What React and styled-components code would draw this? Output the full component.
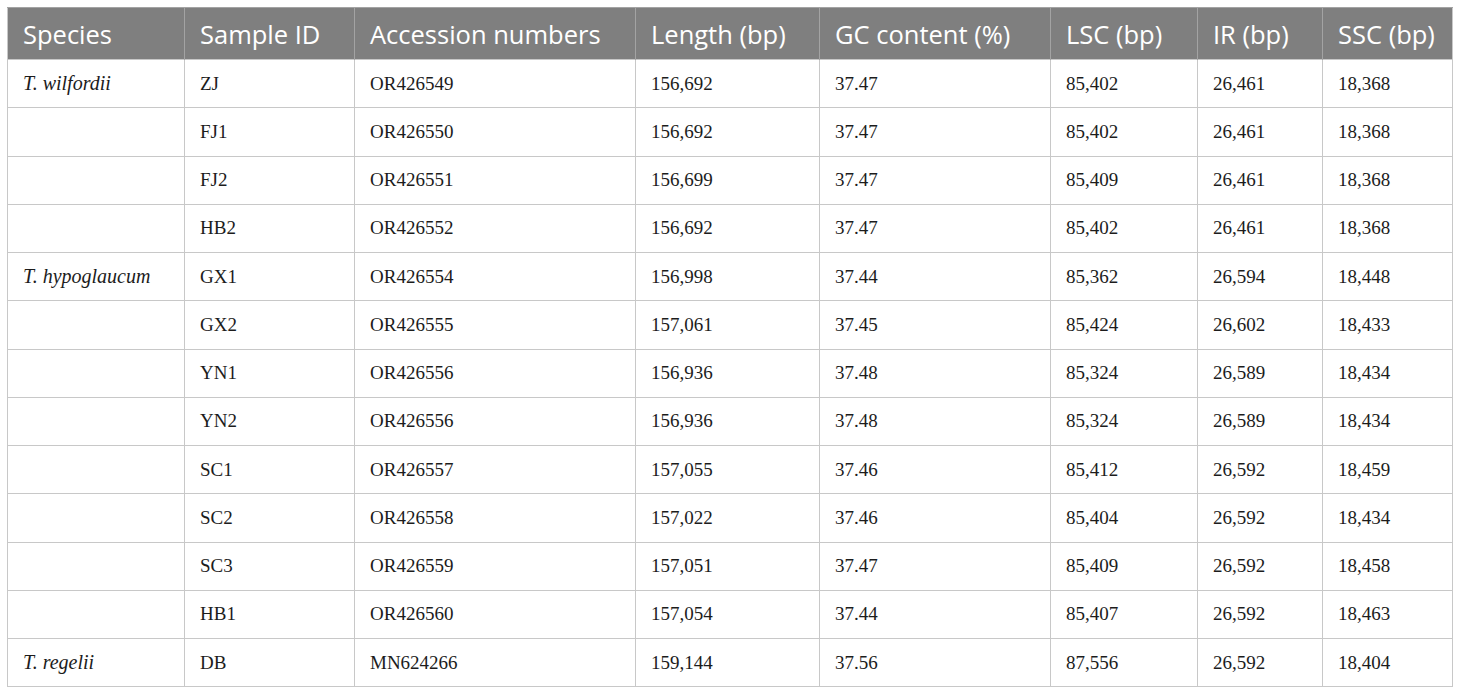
import React from "react";
import styled, { createGlobalStyle } from "styled-components";

const Global = createGlobalStyle`
  html, body { margin: 0; padding: 0; background: #ffffff; }
  body { font-family: "Liberation Serif", "Times New Roman", serif; }
`;

const Page = styled.div`
  padding: 7px 8px 8px 7px;
`;

const Table = styled.table`
  border-collapse: collapse;
  table-layout: fixed;
  width: 1445px;
  border: 1px solid #c8c8c8;
`;

const HeadCell = styled.th`
  height: 51px;
  padding: 0 0 0 15px;
  background: #7f7f7f;
  color: #ffffff;
  font-family: "Open Sans", "Noto Sans", sans-serif;
  font-weight: 400;
  font-size: 25.5px;
  text-align: left;
  white-space: nowrap;
  border-left: 1px solid #a3a3a3;
  border-top: 1px solid #a3a3a3;
  &:first-child { border-left-color: #c8c8c8; }
`;

const Cell = styled.td`
  height: 48.25px;
  padding: 0 0 0 15px;
  font-size: ${(p) => (p.$italic ? "20px" : "19px")};
  color: #1c1c1c;
  font-style: ${(p) => (p.$italic ? "italic" : "normal")};
  border: 1px solid #c8c8c8;
  white-space: nowrap;
  box-sizing: border-box;
`;

const widths = [177, 170, 281, 184, 231, 147, 125, 130];
const headers = [
  "Species",
  "Sample ID",
  "Accession numbers",
  "Length (bp)",
  "GC content (%)",
  "LSC (bp)",
  "IR (bp)",
  "SSC (bp)",
];

const rows = [
  ["T. wilfordii", "ZJ", "OR426549", "156,692", "37.47", "85,402", "26,461", "18,368"],
  ["", "FJ1", "OR426550", "156,692", "37.47", "85,402", "26,461", "18,368"],
  ["", "FJ2", "OR426551", "156,699", "37.47", "85,409", "26,461", "18,368"],
  ["", "HB2", "OR426552", "156,692", "37.47", "85,402", "26,461", "18,368"],
  ["T. hypoglaucum", "GX1", "OR426554", "156,998", "37.44", "85,362", "26,594", "18,448"],
  ["", "GX2", "OR426555", "157,061", "37.45", "85,424", "26,602", "18,433"],
  ["", "YN1", "OR426556", "156,936", "37.48", "85,324", "26,589", "18,434"],
  ["", "YN2", "OR426556", "156,936", "37.48", "85,324", "26,589", "18,434"],
  ["", "SC1", "OR426557", "157,055", "37.46", "85,412", "26,592", "18,459"],
  ["", "SC2", "OR426558", "157,022", "37.46", "85,404", "26,592", "18,434"],
  ["", "SC3", "OR426559", "157,051", "37.47", "85,409", "26,592", "18,458"],
  ["", "HB1", "OR426560", "157,054", "37.44", "85,407", "26,592", "18,463"],
  ["T. regelii", "DB", "MN624266", "159,144", "37.56", "87,556", "26,592", "18,404"],
];

export default function App() {
  return (
    <Page>
      <Global />
      <Table>
        <colgroup>
          {widths.map((w, i) => (
            <col key={i} style={{ width: w }} />
          ))}
        </colgroup>
        <thead>
          <tr>
            {headers.map((h) => (
              <HeadCell key={h}>{h}</HeadCell>
            ))}
          </tr>
        </thead>
        <tbody>
          {rows.map((r, ri) => (
            <tr key={ri}>
              {r.map((c, ci) => (
                <Cell key={ci} $italic={ci === 0}>
                  {c}
                </Cell>
              ))}
            </tr>
          ))}
        </tbody>
      </Table>
    </Page>
  );
}
